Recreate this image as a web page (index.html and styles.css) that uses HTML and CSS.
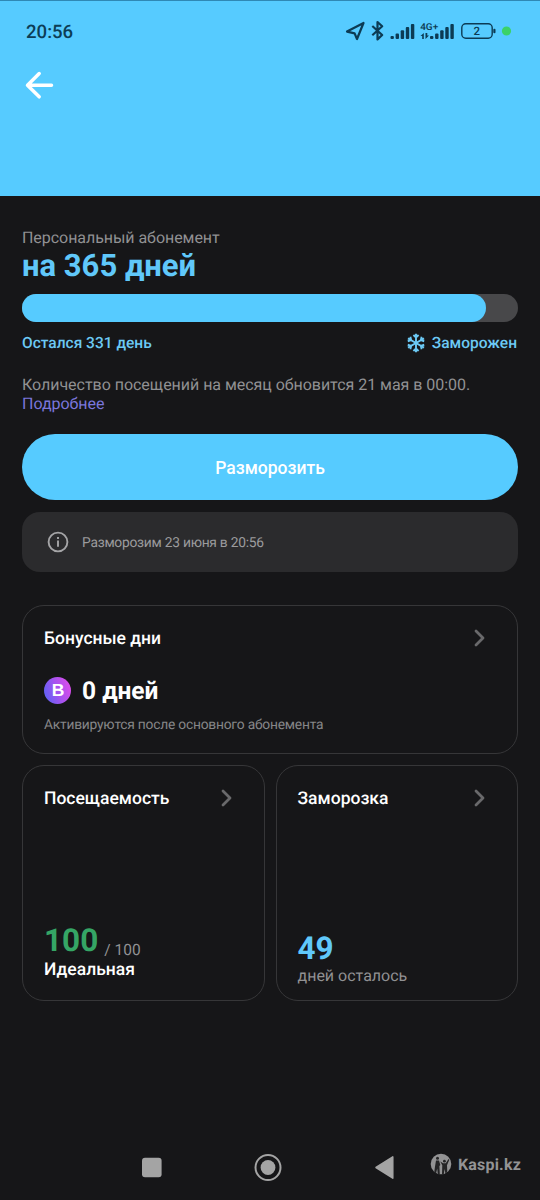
FILE: index.html
```html
<!DOCTYPE html>
<html lang="ru">
<head>
<meta charset="utf-8">
<title>Абонемент</title>
<link rel="stylesheet" href="styles.css">
</head>
<body>
<header class="header">
  <div class="status">
    <span class="clock">20:56</span>
    <svg class="status-icons" width="170" height="30" viewBox="345 15 170 30">
      <path class="line" d="M347 30.6 363.5 22 357 38 354.6 32.4Z"/>
      <path class="line" d="M372.3 25 382.2 34 377.5 38.4V21L382.2 25.2 372.3 34.2"/>
      <g class="solid">
        <rect x="390.5" y="35" width="3.4" height="3" rx="1"/><rect x="395.6" y="32.6" width="3.4" height="5.4" rx="1"/><rect x="400.7" y="29.2" width="3.4" height="8.8" rx="1"/><rect x="405.8" y="26" width="3.4" height="12" rx="1"/><rect x="410.9" y="23" width="3.4" height="15" rx="1"/>
        <rect x="430" y="35" width="3.4" height="3" rx="1"/><rect x="435.1" y="32.6" width="3.4" height="5.4" rx="1"/><rect x="440.2" y="29.2" width="3.4" height="8.8" rx="1"/><rect x="445.3" y="26" width="3.4" height="12" rx="1"/><rect x="450.4" y="23" width="3.4" height="15" rx="1"/>
        <path d="M420.5 35 423.8 32V38H422.2V35ZM429 34.5H427.3V32H425.5V38Z"/>
        <rect x="493.3" y="27.7" width="2.2" height="4.5" rx="1"/>
      </g>
      <rect class="battery" x="461.8" y="22.8" width="30.4" height="14.4" rx="4"/>
      <text class="net" x="420.2" y="28.6" textLength="18" lengthAdjust="spacingAndGlyphs">4G+</text>
      <text class="charge" x="476.8" y="34.4" text-anchor="middle">2</text>
      <circle class="dot" cx="506.5" cy="30" r="4.6"/>
    </svg>
  </div>
  <svg class="back" width="32" height="32" viewBox="0 0 32 32"><path d="M17.2 4.5 5.5 16.2 17.2 27.8M6 16.2H29.5"/></svg>
</header>

<main class="content">
  <div class="caption">Персональный абонемент</div>
  <h1 class="term">на 365 дней</h1>
  <div class="bar"><div class="bar-fill"></div></div>
  <div class="meta">
    <span class="left-days">Остался 331 день</span>
    <span class="frozen">
      <svg width="18" height="20" viewBox="-9 -10 18 20">
        <g id="arm"><path d="M0 0V-9.3M-2.6-8 0-5.6 2.6-8"/></g>
        <use href="#arm" transform="rotate(60)"/><use href="#arm" transform="rotate(120)"/><use href="#arm" transform="rotate(180)"/><use href="#arm" transform="rotate(240)"/><use href="#arm" transform="rotate(300)"/>
      </svg>
      <span class="frozen-label">Заморожен</span>
    </span>
  </div>
  <p class="note"><span class="note-text">Количество посещений на месяц обновится 21 мая в 00:00.</span><br><a class="more">Подробнее</a></p>
  <button class="action"><span>Разморозить</span></button>
  <div class="info">
    <svg width="22" height="22" viewBox="0 0 22 22"><circle cx="11" cy="11" r="9.4"/><path d="M11 9.6V15.8M11 6V8"/></svg>
    <span class="info-text">Разморозим 23 июня в 20:56</span>
  </div>

  <section class="card bonus">
    <div class="card-head"><span class="t-bonus">Бонусные дни</span><svg class="chevron" width="12" height="18" viewBox="0 0 12 18"><path d="M2 2 9 9 2 16"/></svg></div>
    <div class="bonus-row"><span class="coin"><span class="coin-letter">B</span></span><span class="bonus-value">0 дней</span></div>
    <div class="bonus-note">Активируются после основного абонемента</div>
  </section>

  <div class="pair">
    <section class="card">
      <div class="card-head"><span class="t-visit">Посещаемость</span><svg class="chevron" width="12" height="18" viewBox="0 0 12 18"><path d="M2 2 9 9 2 16"/></svg></div>
      <div class="score"><span class="score-value">100</span><span class="score-max">/ 100</span></div>
      <div class="grade"><span>Идеальная</span></div>
    </section>
    <section class="card">
      <div class="card-head"><span class="t-freeze">Заморозка</span><svg class="chevron" width="12" height="18" viewBox="0 0 12 18"><path d="M2 2 9 9 2 16"/></svg></div>
      <div class="days">49</div>
      <div class="days-label"><span>дней осталось</span></div>
    </section>
  </div>
</main>

<footer class="nav">
  <svg class="nav-icons" width="256" height="30" viewBox="140 1152 256 30">
    <rect class="key" x="142" y="1157.7" width="19.6" height="19.6" rx="3"/>
    <circle class="ring" cx="268" cy="1167.5" r="12.5"/><circle class="key" cx="268" cy="1167.5" r="7.4"/>
    <path class="key round" d="M376 1167.5 392.8 1156.8V1178.2Z"/>
  </svg>
  <div class="brand">
    <svg width="22" height="22" viewBox="0 0 22 22">
      <circle class="disc" cx="11" cy="11" r="10.3"/>
      <g class="figure"><circle cx="7.5" cy="5.2" r="1.5"/><path d="M6 7.5H9L10.3 12 9.4 13 9.8 21H7.8L7.2 15.5 6 20.5 4.2 19.5 5 13.5Z"/><circle cx="14.4" cy="8.2" r="1.4"/><path d="M10.2 8.5 13.2 10.2H15.8L18.5 6 19.3 6.7 17 12.2 17.3 19 15.4 20.5 14.6 16 13.8 21H12L12.3 12.2Z"/></g>
    </svg>
    <span class="brand-name">Kaspi.kz</span>
  </div>
</footer>
</body>
</html>
```

FILE: styles.css
```css
* { box-sizing: border-box; }
body {
  margin: 0;
  width: 540px;
  height: 1200px;
  display: flex;
  flex-direction: column;
  overflow: hidden;
  background: #161618;
  color: #fff;
  font-family: Roboto, "Noto Sans", sans-serif;
  text-rendering: geometricPrecision;
}
svg { display: block; flex: none; }
span { white-space: nowrap; }

.header { height: 196px; background: #56cbff; border-top: 1px solid #2f88b5; }
.status { height: 60px; padding: 0 25px 0 26px; display: flex; align-items: center; justify-content: space-between; }
.clock { padding-top: 1px; font-size: 18.6px; font-weight: 500; color: #0c3d56; }
.status-icons { color: #0c3b54; }
.line { fill: none; stroke: currentColor; stroke-width: 2.2; stroke-linejoin: round; }
.solid { fill: currentColor; }
.battery { fill: none; stroke: currentColor; stroke-width: 1.4; }
.net { font-size: 9.5px; font-weight: 500; fill: currentColor; }
.charge { font-size: 11.5px; font-weight: 500; fill: currentColor; }
.dot { fill: #3bd268; }
.back { margin: 8px 0 0 22px; fill: none; stroke: #fff; stroke-width: 3.5; stroke-linecap: round; stroke-linejoin: round; }

.content { padding: 32px 22px 0; }
.caption { font-size: 16px; line-height: 20px; letter-spacing: -.05px; color: #919193; }
.term { margin: 0; font-size: 31px; line-height: 36px; font-weight: 700; color: #60c8fa; }
.bar { height: 28px; margin-top: 10px; border-radius: 14px; background: #48484a; }
.bar-fill { width: 464px; height: 28px; border-radius: 14px; background: #56cbff; }
.meta { height: 24px; margin-top: 9px; display: flex; align-items: center; justify-content: space-between; font-size: 15.5px; font-weight: 500; color: #6cc9f4; }
.left-days { line-height: 22px; padding-bottom: 1px; }
.frozen { display: flex; align-items: center; gap: 7px; padding-right: 1px; }
.frozen svg { fill: none; stroke: #6cc9f4; stroke-width: 1.9; }
.note { margin: 20px 0 0; font-size: 16px; line-height: 19px; letter-spacing: -.03px; color: #919193; }
.more { color: #7b76dc; }
.action { display: flex; align-items: center; justify-content: center; width: 100%; height: 66px; margin: 21px 0 0; padding: 1px 0 0; border: 0; border-radius: 33px; background: #56cbff; color: #fff; font: 500 17.5px Roboto, sans-serif; }
.info { height: 60px; margin-top: 12px; padding-left: 25px; display: flex; align-items: center; gap: 13px; border-radius: 18px; background: #2b2b2d; font-size: 13.8px; letter-spacing: -.25px; color: #9b9b9d; }
.info svg { fill: none; stroke: #a5a5a7; stroke-width: 1.9; }
.info-text { padding-top: 1px; }

.card { height: 236px; padding: 20px 21px 0; border: 1px solid #363638; border-radius: 22px; }
.card-head { height: 24px; display: flex; align-items: center; justify-content: space-between; padding-right: 10px; font-size: 17.5px; font-weight: 500; }
.card-head span { padding-top: 2px; }
.chevron { fill: none; stroke: #69696b; stroke-width: 2.8; stroke-linecap: round; stroke-linejoin: round; }
.bonus { height: 149px; margin-top: 33px; }
.bonus-row { height: 30px; margin-top: 25px; display: flex; align-items: center; gap: 11px; }
.coin { width: 27px; height: 27px; border-radius: 50%; background: linear-gradient(70deg, #5a62f5 5%, #a453f0 50%, #e84ae8); display: flex; align-items: center; justify-content: center; font: 700 17.5px/27px "Liberation Sans", Arial, sans-serif; padding-left: 1px; }
.bonus-value { font-size: 24.5px; font-weight: 700; }
.bonus-note { margin-top: 11px; font-size: 13.8px; line-height: 18px; letter-spacing: -.22px; color: #868688; white-space: nowrap; }
.pair { display: grid; grid-template-columns: 243px 242px; justify-content: space-between; margin-top: 11px; }
.pair .card:last-child { padding-left: 20.5px; }
.score { height: 38px; margin-top: 113px; display: flex; align-items: flex-start; gap: 6px; }
.score-value { font-size: 31.5px; line-height: 36px; font-weight: 700; color: #35a565; }
.score-max { padding-top: 17px; font-size: 15.5px; line-height: 20px; color: #919193; }
.grade { margin-top: -2px; font-size: 17.5px; line-height: 22px; font-weight: 500; }
.days { margin-top: 121px; font-size: 31.5px; line-height: 36px; font-weight: 700; color: #60c8fa; }
.days-label { margin-top: -1px; font-size: 16px; line-height: 20px; color: #919193; }

.nav { height: 66px; margin-top: auto; padding: 0 19px 0 140px; display: flex; align-items: center; justify-content: space-between; }
.key { fill: #a4a4a4; }
.round { stroke: #a4a4a4; stroke-width: 1.5; stroke-linejoin: round; }
.ring { fill: none; stroke: #a4a4a4; stroke-width: 2; }
.brand { display: flex; align-items: center; gap: 6px; padding-bottom: 6px; color: #939394; }
.disc { fill: #939394; }
.figure { fill: #252526; }
.brand-name { font-size: 16px; font-weight: 700; letter-spacing: .2px; }
```
